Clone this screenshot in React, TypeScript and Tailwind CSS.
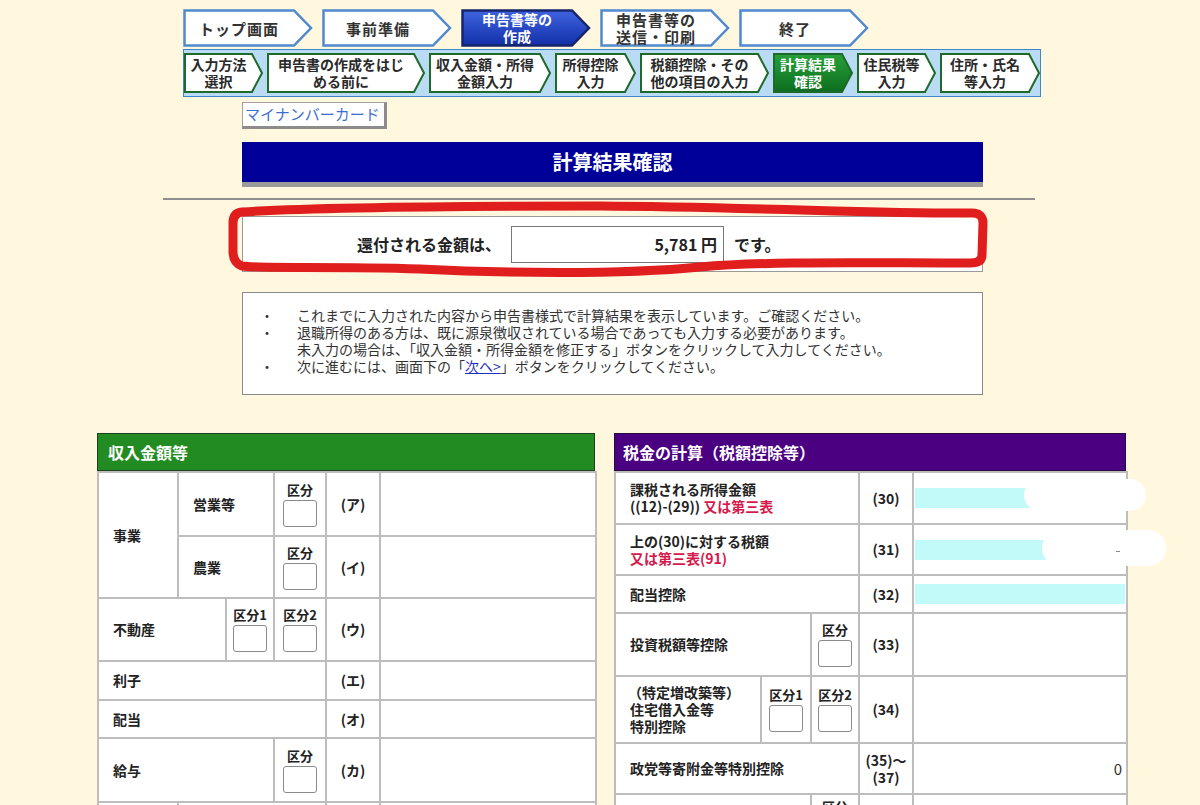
import React from "react";

type StepProps = {
  lines: string[];
  active?: boolean;
};

// top row: big blue-outlined arrows
const TopStep = ({ lines, active }: StepProps) => (
  <div className="relative w-[130px] h-[38px]">
    <svg className="absolute inset-0" width="130" height="38" viewBox="0 0 130 38">
      <defs>
        <linearGradient id="topBlue" x1="0" y1="0" x2="0" y2="1">
          <stop offset="0" stopColor="#3f63e0" />
          <stop offset="1" stopColor="#1230a8" />
        </linearGradient>
      </defs>
      <polygon
        points="1.5,1.5 111,1.5 128,19 111,36.5 1.5,36.5"
        fill={active ? "url(#topBlue)" : "#ffffff"}
        stroke={active ? "#16256b" : "#5089cf"}
        strokeWidth="2.5"
        strokeLinejoin="miter"
      />
    </svg>
    <div
      className={`relative w-[112px] h-full flex flex-col items-center justify-center font-bold ${
        active ? "text-white text-[14px] leading-[17px]" : "text-[#333] text-[15px] leading-[17px] tracking-[1px]"
      }`}
    >
      {lines.map((l) => (
        <span key={l}>{l}</span>
      ))}
    </div>
  </div>
);

// second row: green-outlined arrows
const SubStep = ({ lines, active, width }: StepProps & { width: number }) => (
  <div className="relative h-[40px] shrink-0" style={{ width }}>
    <svg className="absolute inset-0" width={width} height="40" viewBox={`0 0 ${width} 40`}>
      <defs>
        <linearGradient id="subGreen" x1="0" y1="0" x2="0" y2="1">
          <stop offset="0" stopColor="#27a03a" />
          <stop offset="1" stopColor="#0d6e1e" />
        </linearGradient>
      </defs>
      <polygon
        points={`1,1 ${width - 11},1 ${width - 1},20 ${width - 11},39 1,39`}
        fill={active ? "url(#subGreen)" : "#ffffff"}
        stroke="#1d6a2a"
        strokeWidth="2"
      />
    </svg>
    <div
      className={`relative h-full flex flex-col items-center justify-center text-[14px] leading-[17px] font-bold ${
        active ? "text-white" : "text-[#2a2a2a]"
      }`}
      style={{ width: width - 10 }}
    >
      {lines.map((l) => (
        <span key={l}>{l}</span>
      ))}
    </div>
  </div>
);

const subSteps = [
  { lines: ["入力方法", "選択"], width: 79 },
  { lines: ["申告書の作成をはじ", "める前に"], width: 158 },
  { lines: ["収入金額・所得", "金額入力"], width: 122 },
  { lines: ["所得控除", "入力"], width: 81 },
  { lines: ["税額控除・その", "他の項目の入力"], width: 129 },
  { lines: ["計算結果", "確認"], width: 80, active: true },
  { lines: ["住民税等", "入力"], width: 79 },
  { lines: ["住所・氏名", "等入力"], width: 100 },
];

// small "区分" label + empty box
const Kubun = ({ label = "区分" }: { label?: string }) => (
  <div className="flex flex-col items-center">
    <span className="text-[13px] leading-[16px] font-bold text-[#222]">{label}</span>
    <div className="mt-[2px] w-[34px] h-[27px] bg-white border border-[#8a8a8a] rounded-[3px]" />
  </div>
);

const cell = "border-2 border-[#bdbdbd] pl-[14px] align-middle";
const codeCell = "border-2 border-[#bdbdbd] text-center align-middle";
const kubunCell = "border-2 border-[#bdbdbd] align-middle";
const valCell = "border-2 border-[#bdbdbd]";

const CyanBar = () => <div className="mx-[1px] h-[20px] bg-[#c2fafa]" />;

const App = () => {
  return (
    <div className="relative w-[1200px] h-[805px] overflow-hidden bg-[#fff7de] font-['Noto_Sans_CJK_JP','Noto_Sans',sans-serif] text-[#222]">
      {/* TOP STEPS */}
      <div className="flex gap-[9px] pl-[183px] pt-[9px]">
        <TopStep lines={["トップ画面"]} />
        <TopStep lines={["事前準備"]} />
        <TopStep lines={["申告書等の", "作成"]} active />
        <TopStep lines={["申告書等の", "送信・印刷"]} />
        <TopStep lines={["終了"]} />
      </div>

      {/* SUB STEPS */}
      <div className="ml-[183px] mt-[2px] w-[858px] h-[48px] bg-[#b9dcf4] border border-[#3f85c9] flex items-center gap-[4px]">
        {subSteps.map((s) => (
          <SubStep key={s.lines.join("")} lines={s.lines} width={s.width} active={s.active} />
        ))}
      </div>

      {/* MY NUMBER BUTTON */}
      <div className="ml-[242px] mt-[5px] w-[145px] h-[27px] bg-white border border-[#a0a0a0] border-r-[3px] border-b-[3px] border-r-[#8c8c8c] border-b-[#8c8c8c] pl-[2px] text-[15px] leading-[22px] text-[#3d6fd1]">
        マイナンバーカード
      </div>

      {/* TITLE */}
      <div className="ml-[242px] mt-[13px] w-[741px]">
        <div className="h-[40px] bg-[#000099] flex items-center justify-center text-white text-[20px] font-bold">
          計算結果確認
        </div>
        <div className="h-[5px] bg-[#9a9a9a]" />
      </div>

      <div className="ml-[163px] mt-[11px] w-[872px] h-[2px] bg-[#8f8f8f]" />

      {/* REFUND */}
      <div className="relative ml-[242px] mt-[16px] w-[741px] h-[56px] bg-white border border-[#9a9a9a] flex items-center pl-[114px]">
        <span className="text-[16px] font-bold">還付される金額は、</span>
        <div className="ml-[10px] w-[213px] h-[37px] border border-[#777] flex items-center justify-end pr-[6px] text-[16px] font-bold">
          5,781&nbsp;円
        </div>
        <span className="ml-[10px] text-[16px] font-semibold">です。</span>
        <svg
          className="absolute left-[-21px] top-[-21px] pointer-events-none"
          width="790"
          height="100"
          viewBox="222 195 790 100"
        >
          <path
            d="M242 211 C 320 206, 450 205, 600 205 C 750 206, 890 213, 972 212 Q 983 212 983 222 L 982 254 Q 982 262 970 262 C 860 262, 770 260, 700 266 C 620 274, 500 272, 420 268 C 330 265, 262 268, 242 265 Q 233 262 233 250 L 233 222 Q 233 212 242 211 Z"
            fill="none"
            stroke="#e01e1e"
            strokeWidth="9"
            strokeLinejoin="round"
          />
        </svg>
      </div>

      {/* NOTES */}
      <div className="ml-[242px] mt-[20px] w-[741px] h-[103px] bg-white border border-[#8a8a8a] pt-[14px] pl-[17px] text-[14px] leading-[17px] text-[#333]">
        <div className="flex">
          <span className="w-[37px]">・</span>
          <span>これまでに入力された内容から申告書様式で計算結果を表示しています。ご確認ください。</span>
        </div>
        <div className="flex">
          <span className="w-[37px]">・</span>
          <span>退職所得のある方は、既に源泉徴収されている場合であっても入力する必要があります。</span>
        </div>
        <div className="flex">
          <span className="w-[37px]" />
          <span>未入力の場合は、「収入金額・所得金額を修正する」ボタンをクリックして入力してください。</span>
        </div>
        <div className="flex">
          <span className="w-[37px]">・</span>
          <span>
            次に進むには、画面下の「<span className="text-[#1a2fc0] underline">次へ&gt;</span>」ボタンをクリックしてください。
          </span>
        </div>
      </div>

      {/* TABLES */}
      <div className="ml-[97px] mt-[38px] flex gap-[19px] items-start">
        {/* LEFT */}
        <div className="w-[498px]">
          <div className="h-[38px] bg-[#228b22] border border-[#1f3f1f] pl-[10px] flex items-center text-white text-[16px] font-bold">
            収入金額等
          </div>
          <table className="w-[498px] table-fixed border-collapse bg-white text-[14px] font-bold">
            <colgroup>
              <col className="w-[80px]" />
              <col className="w-[48px]" />
              <col className="w-[48px]" />
              <col className="w-[52px]" />
              <col className="w-[54px]" />
              <col className="w-[216px]" />
            </colgroup>
            <tbody>
              <tr className="h-[64px]">
                <td rowSpan={2} className={cell}>事業</td>
                <td colSpan={2} className={cell}>営業等</td>
                <td className={kubunCell}><Kubun /></td>
                <td className={codeCell}>(ア)</td>
                <td className={valCell} />
              </tr>
              <tr className="h-[62px]">
                <td colSpan={2} className={cell}>農業</td>
                <td className={kubunCell}><Kubun /></td>
                <td className={codeCell}>(イ)</td>
                <td className={valCell} />
              </tr>
              <tr className="h-[63px]">
                <td colSpan={2} className={cell}>不動産</td>
                <td className={kubunCell}><Kubun label="区分1" /></td>
                <td className={kubunCell}><Kubun label="区分2" /></td>
                <td className={codeCell}>(ウ)</td>
                <td className={valCell} />
              </tr>
              <tr className="h-[39px]">
                <td colSpan={4} className={cell}>利子</td>
                <td className={codeCell}>(エ)</td>
                <td className={valCell} />
              </tr>
              <tr className="h-[38px]">
                <td colSpan={4} className={cell}>配当</td>
                <td className={codeCell}>(オ)</td>
                <td className={valCell} />
              </tr>
              <tr className="h-[64px]">
                <td colSpan={3} className={cell}>給与</td>
                <td className={kubunCell}><Kubun /></td>
                <td className={codeCell}>(カ)</td>
                <td className={valCell} />
              </tr>
              <tr className="h-[60px]">
                <td className={cell} />
                <td colSpan={3} className={cell} />
                <td className={codeCell} />
                <td className={valCell} />
              </tr>
            </tbody>
          </table>
        </div>

        {/* RIGHT */}
        <div className="w-[512px]">
          <div className="h-[38px] bg-[#4b0082] border border-[#2a0a40] pl-[8px] flex items-center text-white text-[16px] font-bold">
            税金の計算（税額控除等）
          </div>
          <table className="w-[512px] table-fixed border-collapse bg-white text-[14px] font-bold leading-[17px]">
            <colgroup>
              <col className="w-[146px]" />
              <col className="w-[50px]" />
              <col className="w-[48px]" />
              <col className="w-[54px]" />
              <col className="w-[214px]" />
            </colgroup>
            <tbody>
              <tr className="h-[52px]">
                <td colSpan={3} className={cell}>
                  <div>課税される所得金額</div>
                  <div>
                    ((12)-(29)) <span className="text-[#d6194b]">又は第三表</span>
                  </div>
                </td>
                <td className={codeCell}>(30)</td>
                <td className={valCell}><CyanBar /></td>
              </tr>
              <tr className="h-[51px]">
                <td colSpan={3} className={cell}>
                  <div>上の(30)に対する税額</div>
                  <div className="text-[#d6194b]">又は第三表(91)</div>
                </td>
                <td className={codeCell}>(31)</td>
                <td className={valCell}><CyanBar /></td>
              </tr>
              <tr className="h-[38px]">
                <td colSpan={3} className={cell}>配当控除</td>
                <td className={codeCell}>(32)</td>
                <td className={valCell}><CyanBar /></td>
              </tr>
              <tr className="h-[63px]">
                <td colSpan={2} className={cell}>投資税額等控除</td>
                <td className={kubunCell}><Kubun /></td>
                <td className={codeCell}>(33)</td>
                <td className={valCell} />
              </tr>
              <tr className="h-[67px]">
                <td className={cell}>
                  <div className="-ml-[2px]">（特定増改築等）</div>
                  <div>住宅借入金等</div>
                  <div>特別控除</div>
                </td>
                <td className={kubunCell}><Kubun label="区分1" /></td>
                <td className={kubunCell}><Kubun label="区分2" /></td>
                <td className={codeCell}>(34)</td>
                <td className={valCell} />
              </tr>
              <tr className="h-[51px]">
                <td colSpan={3} className={cell}>政党等寄附金等特別控除</td>
                <td className={codeCell}>
                  <div>(35)～</div>
                  <div>(37)</div>
                </td>
                <td className={`${valCell} text-right pr-[4px] text-[15px] font-normal text-[#333]`}>0</td>
              </tr>
              <tr className="h-[63px]">
                <td colSpan={2} className={cell} />
                <td className={`${kubunCell} align-top pt-[4px]`}><Kubun /></td>
                <td className={codeCell} />
                <td className={valCell} />
              </tr>
            </tbody>
          </table>
        </div>
      </div>

      {/* redacted amounts */}
      <div className="absolute left-[1024px] top-[479px] w-[122px] h-[32px] rounded-[18px] bg-white" />
      <div className="absolute left-[1042px] top-[530px] w-[124px] h-[36px] rounded-[18px] bg-white" />
      <div className="absolute left-[1116px] top-[551px] w-[4px] h-[1px] bg-[#888]" />
    </div>
  );
};

export default App;
